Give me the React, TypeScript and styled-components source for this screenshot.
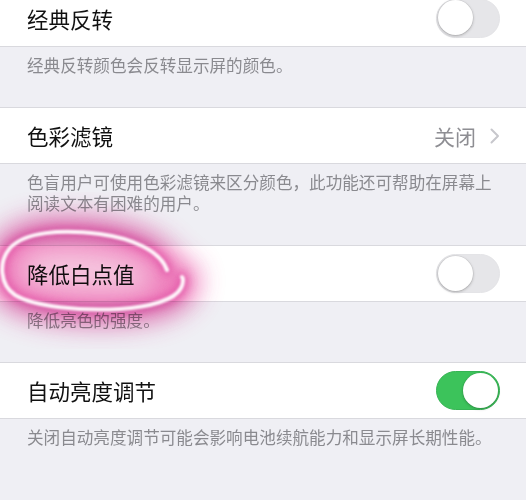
import React from "react";
import styled, { createGlobalStyle } from "styled-components";

const Global = createGlobalStyle`
  html, body { margin: 0; padding: 0; background: #efeff4; }
  body { font-family: "Noto Sans CJK SC", "Noto Sans", sans-serif; -webkit-font-smoothing: antialiased; }
`;

const Screen = styled.div`
  position: relative;
  width: 526px;
  height: 500px;
  overflow: hidden;
  background: #efeff4;
`;

const List = styled.div`
  display: flex;
  flex-direction: column;
  margin-top: -10px;
`;

const Row = styled.div<{ $top?: boolean }>`
  display: flex;
  align-items: center;
  justify-content: space-between;
  box-sizing: border-box;
  height: 57px;
  padding: 0 26px 0 27px;
  background: #fff;
  border-bottom: 1px solid #d9d9de;
  border-top: ${(p) => (p.$top ? "1px solid #d9d9de" : "none")};
`;

const Title = styled.span`
  font-size: 21.5px;
  color: #111;
  letter-spacing: 0;
`;

const Value = styled.span`
  display: flex;
  align-items: center;
  gap: 14px;
  font-size: 21px;
  color: #8e8e93;
`;

const Footer = styled.div`
  padding: 8px 24px 31px 27px;
  font-size: 16.6px;
  line-height: 21px;
  color: #8a8a8f;
`;

const Track = styled.div<{ $on: boolean }>`
  position: relative;
  width: 64px;
  height: 39px;
  border-radius: 20px;
  box-sizing: border-box;
  background: ${(p) => (p.$on ? "#3cc35b" : "#e6e6e9")};
  border: ${(p) => (p.$on ? "1.5px solid #36b454" : "1.5px solid #e4e4e7")};
`;

const Knob = styled.div<{ $on: boolean }>`
  position: absolute;
  top: 0.5px;
  left: ${(p) => (p.$on ? "25.5px" : "0.5px")};
  width: 35px;
  height: 35px;
  border-radius: 50%;
  background: #fff;
  box-shadow: 0 1px 3px rgba(0, 0, 0, 0.25), 0 0 0 0.5px rgba(0, 0, 0, 0.08);
`;

const Overlay = styled.svg`
  position: absolute;
  left: 0;
  top: 0;
  pointer-events: none;
`;

const Toggle = ({ on }: { on: boolean }) => (
  <Track $on={on}>
    <Knob $on={on} />
  </Track>
);

const Chevron = () => (
  <svg width="10" height="16" viewBox="0 0 10 16">
    <path d="M1.5 1.5 L8 8 L1.5 14.5" fill="none" stroke="#c7c7cc" strokeWidth="2" strokeLinecap="round" strokeLinejoin="round" />
  </svg>
);

const loop =
  "M167,270 C160,250 130,238 100,234 C60,229 25,232 10,248 C-2,262 0,285 15,295 C35,307 80,311 120,309 C150,307 175,300 181,288 C184,282 183,278 182,277";

export default function App() {
  return (
    <Screen>
      <Global />
      <List>
        <Row>
          <Title>经典反转</Title>
          <Toggle on={false} />
        </Row>
        <Footer>经典反转颜色会反转显示屏的颜色。</Footer>
        <Row $top>
          <Title>色彩滤镜</Title>
          <Value>
            关闭
            <Chevron />
          </Value>
        </Row>
        <Footer>色盲用户可使用色彩滤镜来区分颜色，此功能还可帮助在屏幕上阅读文本有困难的用户。</Footer>
        <Row $top>
          <Title>降低白点值</Title>
          <Toggle on={false} />
        </Row>
        <Footer>降低亮色的强度。</Footer>
        <Row $top>
          <Title>自动亮度调节</Title>
          <Toggle on={true} />
        </Row>
        <Footer>关闭自动亮度调节可能会影响电池续航能力和显示屏长期性能。</Footer>
      </List>
      <Overlay width="526" height="500" viewBox="0 0 526 500">
        <defs>
          <filter id="blurA" x="-50%" y="-50%" width="200%" height="200%">
            <feGaussianBlur stdDeviation="13" />
          </filter>
          <filter id="blurB" x="-50%" y="-50%" width="200%" height="200%">
            <feGaussianBlur stdDeviation="5" />
          </filter>
          <filter id="blurC" x="-50%" y="-50%" width="200%" height="200%">
            <feGaussianBlur stdDeviation="0.8" />
          </filter>
        </defs>
        <g style={{ mixBlendMode: "multiply" }}>
          <path d={loop} fill="#f6c6df" stroke="none" filter="url(#blurA)" />
          <path d={loop} fill="none" stroke="#ec6fb4" strokeWidth="32" strokeLinecap="round" filter="url(#blurA)" opacity="0.9" />
          <path d={loop} fill="none" stroke="#e04ea3" strokeWidth="10" strokeLinecap="round" filter="url(#blurB)" opacity="0.85" />
        </g>
        <path d={loop} fill="none" stroke="#fff6fb" strokeWidth="4" strokeLinecap="round" filter="url(#blurC)" />
      </Overlay>
    </Screen>
  );
}
